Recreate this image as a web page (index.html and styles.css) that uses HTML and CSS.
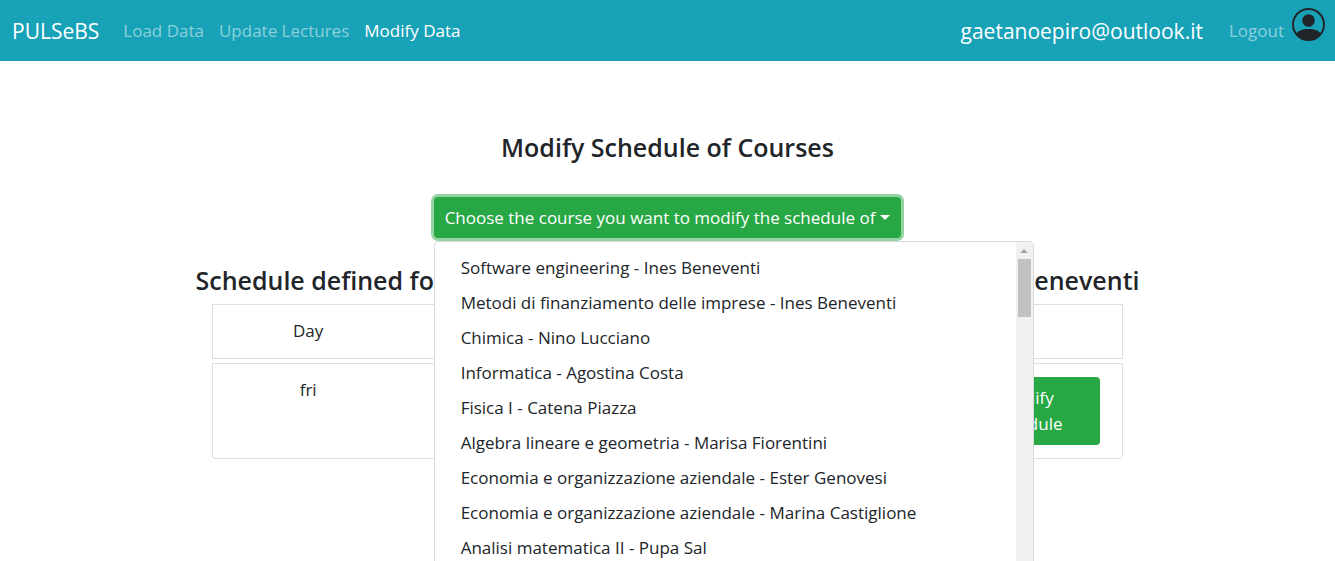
FILE: index.html
```html
<!DOCTYPE html>
<html lang="en">
<head>
  <meta charset="utf-8">
  <meta name="viewport" content="width=device-width, initial-scale=1">
  <title>PULSeBS</title>
  <link rel="stylesheet" href="styles.css">
</head>
<body>
  <header class="navbar">
    <a class="brand" href="#">PULSeBS</a>
    <nav class="nav">
      <a class="nav-link" href="#">Load Data</a>
      <a class="nav-link" href="#">Update Lectures</a>
      <a class="nav-link active" href="#">Modify Data</a>
    </nav>
    <div class="account">
      <span class="email">gaetanoepiro@outlook.it</span>
      <a class="nav-link logout" href="#">Logout</a>
      <svg class="avatar" viewBox="0 0 33 33" aria-hidden="true">
        <defs><clipPath id="disc"><circle cx="16.500" cy="16.500" r="15.500"/></clipPath></defs>
        <circle cx="16.500" cy="12.500" r="6.300" fill="#212529"/>
        <path d="M3 27C6 22.500 10 21 16.500 21S27 22.500 30 27L25 33H8Z" fill="#212529" clip-path="url(#disc)"/>
        <circle cx="16.500" cy="16.500" r="15.500" fill="none" stroke="#212529" stroke-width="2"/>
      </svg>
    </div>
  </header>

  <main class="page">
    <h1 class="title">Modify Schedule of Courses</h1>

    <div class="dropdown">
      <button class="btn toggle" type="button" aria-haspopup="true" aria-expanded="true">Choose the course you want to modify the schedule of<span class="caret"></span></button>
      <div class="menu">
        <div class="menu-list">
          <a class="item" href="#">Software engineering - Ines Beneventi</a>
          <a class="item" href="#">Metodi di finanziamento delle imprese - Ines Beneventi</a>
          <a class="item" href="#">Chimica - Nino Lucciano</a>
          <a class="item" href="#">Informatica - Agostina Costa</a>
          <a class="item" href="#">Fisica I - Catena Piazza</a>
          <a class="item" href="#">Algebra lineare e geometria - Marisa Fiorentini</a>
          <a class="item" href="#">Economia e organizzazione aziendale - Ester Genovesi</a>
          <a class="item" href="#">Economia e organizzazione aziendale - Marina Castiglione</a>
          <a class="item" href="#">Analisi matematica II - Pupa Sal</a>
        </div>
        <div class="scrollbar" aria-hidden="true">
          <span class="scroll-up"></span>
          <span class="scroll-thumb"></span>
        </div>
      </div>
    </div>

    <h2 class="title schedule-title"><span>Schedule defined for</span> <span>Beneventi</span></h2>

    <table class="schedule">
      <colgroup><col class="col-day"><col><col><col><col class="col-action"></colgroup>
      <thead>
        <tr><th scope="col">Day</th><td></td><td></td><td></td><td></td></tr>
      </thead>
      <tbody>
        <tr><td>fri</td><td></td><td></td><td></td><td class="action"><button class="btn modify" type="button">Modify Schedule</button></td></tr>
      </tbody>
    </table>
  </main>
</body>
</html>
```
FILE: styles.css
```css
* { box-sizing: border-box; }

body {
  margin: 0;
  font-family: "Open Sans", "Noto Sans", sans-serif;
  font-size: 17px;
  line-height: 26px;
  color: #212529;
  background: #fff;
}

a { text-decoration: none; }

.navbar {
  display: flex;
  align-items: center;
  height: 61px;
  padding: 0 10px 0 12px;
  background: #17a2b8;
}

.brand { color: #fff; font-size: 21px; margin-right: 24px; }
.nav { display: flex; gap: 15px; }
.nav-link { color: rgba(255, 255, 255, 0.5); }
.nav-link.active { color: #fff; }
.account { display: flex; align-items: center; margin-left: auto; }
.email { color: #fff; font-size: 21px; margin-right: 26px; }
.logout { margin-right: 8px; }
.avatar { width: 33px; height: 33px; margin-bottom: 12px; }

.page {
  display: flex;
  flex-direction: column;
  align-items: center;
  min-height: calc(100vh - 61px);
  padding: 70px 16px 0;
  overflow: hidden;
}

.title {
  margin: 0;
  font-size: 25px;
  font-weight: 600;
  line-height: 32px;
  text-align: center;
}

.schedule-title {
  display: flex;
  justify-content: space-between;
  width: 100%;
  max-width: 944px;
  margin-bottom: 4px;
}

.btn {
  border: 0;
  border-radius: 4px;
  padding: 8px 11px;
  font: inherit;
  color: #fff;
  background: #28a745;
}

.dropdown { position: relative; margin: 34px 0 26px; }

.toggle {
  display: flex;
  align-items: center;
  gap: 5px;
  height: 41px;
  box-shadow: 0 0 0 3px #94d3a2;
}

.caret {
  border-top: 5px solid #fff;
  border-left: 5px solid transparent;
  border-right: 5px solid transparent;
}

.menu {
  position: absolute;
  top: 100%;
  left: 0;
  display: flex;
  width: 600px;
  min-height: 360px;
  margin-top: 3px;
  border: 1px solid #d9d9d9;
  border-radius: 4px;
  background: #fff;
}

.menu-list { flex: 1; padding: 8px 0; }

.item {
  display: block;
  padding: 4px 26px;
  line-height: 27px;
  color: #212529;
}

.scrollbar {
  display: flex;
  flex-direction: column;
  align-items: center;
  width: 17px;
  background: #f1f1f1;
}

.scroll-up {
  margin: 7px 0 6px;
  border-bottom: 4px solid #a3a3a3;
  border-left: 4px solid transparent;
  border-right: 4px solid transparent;
}

.scroll-thumb { width: 13px; height: 58px; background: #c1c1c1; }

.schedule {
  width: 70%;
  max-width: 911px;
  table-layout: fixed;
  border-collapse: separate;
  border-spacing: 0 4px;
}

.col-day { width: 21%; }
.col-action { width: 186px; }

.schedule th,
.schedule td {
  height: 55px;
  padding: 13px 0;
  border: solid #dfdfe2;
  border-width: 1px 0;
  font-weight: 400;
  text-align: center;
  vertical-align: top;
}

.schedule tr > :first-child { border-left-width: 1px; }
.schedule tr > :last-child { border-right-width: 1px; }
.schedule tbody tr > :first-child { border-bottom-left-radius: 4px; }
.schedule tbody tr > :last-child { border-bottom-right-radius: 4px; }

.schedule .action { padding-left: 16px; padding-right: 22px; }
.modify { width: 100%; padding: 8px 30px; }
```
